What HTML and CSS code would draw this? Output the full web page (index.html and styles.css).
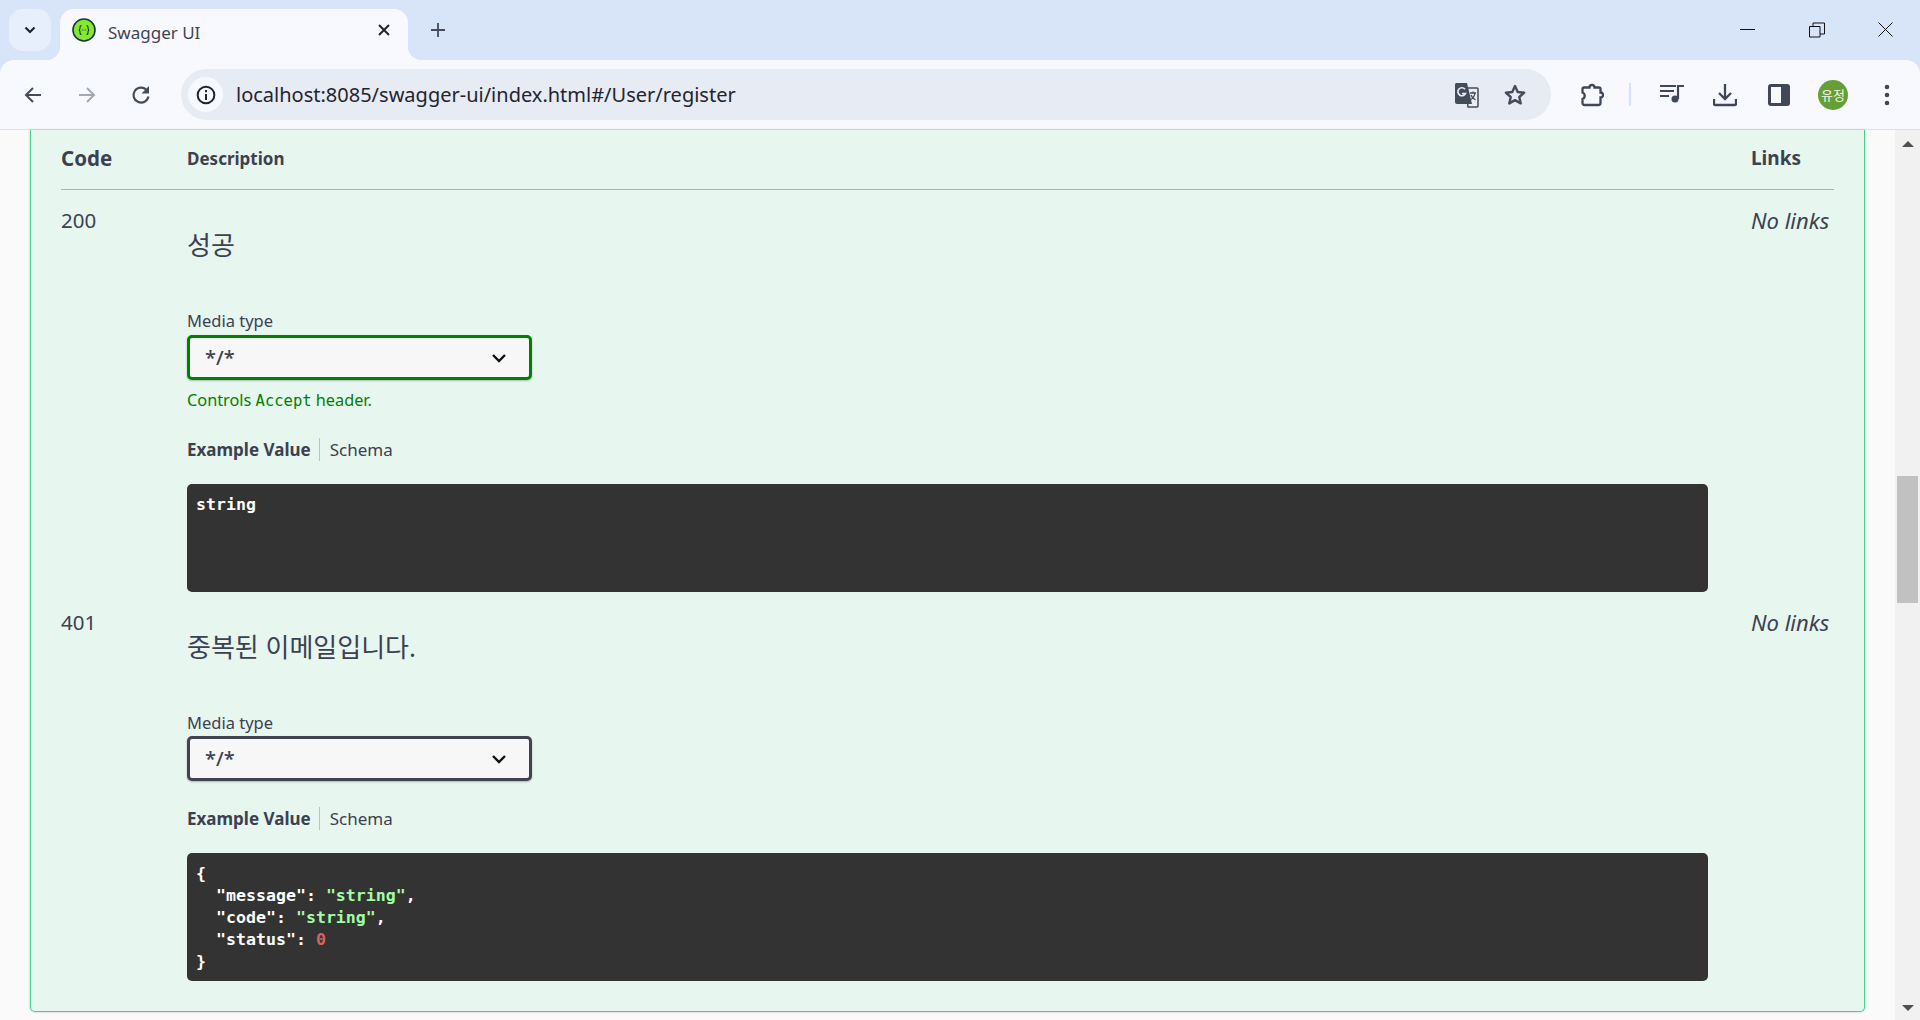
FILE: index.html
```html
<!DOCTYPE html>
<html lang="ko">
<head>
<meta charset="utf-8">
<title>Swagger UI</title>
<link rel="stylesheet" href="styles.css">
</head>
<body>
<header class="chrome">
  <div class="tabstrip">
    <button class="tab-search"><svg width="16" height="16" viewBox="0 0 16 16"><path d="M3.500 5.500 8 10l4.500-4.500" fill="none" stroke="#1f2430" stroke-width="2.200"/></svg></button>
    <div class="tab">
      <svg class="favicon" width="24" height="24" viewBox="0 0 24 24"><circle cx="12" cy="12" r="11" fill="#85ea2d" stroke="#173647" stroke-width="1.600"/><path d="M9.500 7.500c-2 0-1.400 2-1.600 3.300-.1.800-.6 1.200-1.200 1.200.6 0 1.100.4 1.200 1.200.2 1.300-.4 3.300 1.600 3.300M14.500 7.500c2 0 1.400 2 1.600 3.300.1.800.6 1.200 1.200 1.200-.6 0-1.100.4-1.200 1.200-.2 1.300.4 3.300-1.600 3.300" fill="none" stroke="#173647" stroke-width="1.100"/><path d="M9.800 12h.8m1 0h.8m1 0h.8" stroke="#173647" stroke-width="1.200"/></svg>
      <span class="tab-title">Swagger UI</span>
      <svg class="tab-close" width="14" height="14" viewBox="0 0 14 14"><path d="M2 2l10 10M12 2 2 12" stroke="#1f2430" stroke-width="2"/></svg>
    </div>
    <svg class="new-tab" width="18" height="18" viewBox="0 0 18 18"><path d="M9 2v14M2 9h14" stroke="#444b59" stroke-width="1.800"/></svg>
    <div class="window-controls">
      <svg width="16" height="16" viewBox="0 0 16 16"><path d="M0 7.500h15" stroke="#111" stroke-width="1"/></svg>
      <svg width="16" height="16" viewBox="0 0 16 16"><path d="M.5 4.500h10.500v10.500h-10.500zM4 4.500v-3.500h11.500v11h-4.500" fill="none" stroke="#111" stroke-width="1"/></svg>
      <svg width="16" height="16" viewBox="0 0 16 16"><path d="M.5.500l14 14M14.500.500l-14 14" stroke="#111" stroke-width="1"/></svg>
    </div>
  </div>
  <div class="toolbar">
    <div class="nav-group">
      <svg width="20" height="20" viewBox="0 0 20 20"><path d="M18 10H3M10 3l-7 7 7 7" fill="none" stroke="#444b59" stroke-width="2"/></svg>
      <svg width="20" height="20" viewBox="0 0 20 20"><path d="M2 10h15M10 3l7 7-7 7" fill="none" stroke="#a4a8b0" stroke-width="2"/></svg>
      <svg width="20" height="20" viewBox="0 0 20 20"><path d="M15.300 4.800A7.500 7.500 0 1 0 17.400 11.500" fill="none" stroke="#444b59" stroke-width="2.200"/><path d="M18 1v7.500h-7.500z" fill="#444b59"/></svg>
    </div>
    <div class="omnibox">
      <span class="site-info"><svg width="20" height="20" viewBox="0 0 18 18"><circle cx="9" cy="9" r="7.500" fill="none" stroke="#1f2430" stroke-width="1.800"/><path d="M9 8v5.500M9 4.500v2" stroke="#1f2430" stroke-width="1.800"/></svg></span>
      <span class="url">localhost:8085/swagger-ui/index.html#/User/register</span>
      <svg class="translate" width="26" height="26" viewBox="0 0 26 26"><path d="M12 6h11a1 1 0 0 1 1 1v17a1 1 0 0 1-1 1H14z" fill="#e9edf6" stroke="#444b59" stroke-width="1.500"/><path d="M2 1h11l5 21H3a2 2 0 0 1-2-2V2z" fill="#444b59"/><path d="M16 11h6M19 9.500v1.500M21 11c-.5 3-2.500 6-5 7M17 13c.7 2 2.500 4 4.500 5" fill="none" stroke="#444b59" stroke-width="1.300"/><path d="M11 7.200a4 4 0 1 0 .5 4.300H8" fill="none" stroke="#e9edf6" stroke-width="1.700"/></svg>
      <svg class="star" width="24" height="24" viewBox="0 0 24 24"><path d="m12 3 2.700 6 6.500.7-4.900 4.300 1.400 6.400-5.700-3.300-5.700 3.300 1.400-6.400-4.900-4.300 6.500-.7z" fill="none" stroke="#444b59" stroke-width="2.400" stroke-linejoin="round"/></svg>
    </div>
    <div class="actions">
      <svg class="extension" width="24" height="24" viewBox="0 0 24 24"><path d="M4 4.500h5.500a2.500 2.500 0 0 1 5 0H19a1.500 1.500 0 0 1 1.500 1.500V9.500a2.500 2.500 0 0 1 0 5V20a2 2 0 0 1-2 2H4.500a2 2 0 0 1-2-2v-4a3.500 3.500 0 0 0 0-6.500V6A1.500 1.500 0 0 1 4 4.500z" fill="none" stroke="#3f4759" stroke-width="2.300"/></svg>
      <span class="divider"></span>
      <svg class="playlist" width="24" height="24" viewBox="0 0 24 24"><path d="M0 3h16M0 8h14M0 13h9" stroke="#3f4759" stroke-width="2"/><circle cx="15" cy="16" r="3.500" fill="#3f4759"/><path d="M18 16V3h6" fill="none" stroke="#3f4759" stroke-width="2.200"/></svg>
      <svg class="download" width="24" height="24" viewBox="0 0 24 24"><path d="M12 1v14M6 10l6 6 6-6M1 16v5a1 1 0 0 0 1 1h20a1 1 0 0 0 1-1v-5" fill="none" stroke="#3f4759" stroke-width="2.300"/></svg>
      <svg class="sidepanel" width="22" height="22" viewBox="0 0 22 22"><rect x="0" y="0" width="22" height="22" rx="3" fill="#3f4759"/><rect x="3" y="3" width="10" height="16" fill="#f8f9fe"/></svg>
      <span class="avatar">유정</span>
      <svg class="menu" width="6" height="22" viewBox="0 0 6 22"><circle cx="3" cy="3" r="2.300" fill="#3f4759"/><circle cx="3" cy="11" r="2.300" fill="#3f4759"/><circle cx="3" cy="19" r="2.300" fill="#3f4759"/></svg>
    </div>
  </div>
</header>

<div class="viewport">
  <main class="page">
    <section class="opblock">
      <div class="row head">
        <div class="head-code">Code</div>
        <div class="head-desc">Description</div>
        <div class="head-links">Links</div>
      </div>

      <div class="row response first">
        <div class="num">200</div>
        <div class="col-desc">
          <p class="message">성공</p>
          <div class="media">
            <label class="media-label">Media type</label>
            <div class="select active">*/*<svg width="20" height="20" viewBox="0 0 20 20"><path d="M4 7l6 6 6-6" fill="none" stroke="#111" stroke-width="2.400"/></svg></div>
            <small class="controls">Controls <code>Accept</code> header.</small>
          </div>
          <div class="tabs"><span class="on">Example Value</span><span class="off">Schema</span></div>
          <pre class="code tall"><span class="line">string</span></pre>
        </div>
        <div class="none">No links</div>
      </div>

      <div class="row response">
        <div class="num">401</div>
        <div class="col-desc">
          <p class="message">중복된 이메일입니다.</p>
          <div class="media">
            <label class="media-label">Media type</label>
            <div class="select">*/*<svg width="20" height="20" viewBox="0 0 20 20"><path d="M4 7l6 6 6-6" fill="none" stroke="#111" stroke-width="2.400"/></svg></div>
          </div>
          <div class="tabs plain"><span class="on">Example Value</span><span class="off">Schema</span></div>
          <pre class="code json"><span class="line">{</span><span class="line">  "message": <i>"string"</i>,</span><span class="line">  "code": <i>"string"</i>,</span><span class="line">  "status": <em>0</em></span><span class="line">}</span></pre>
        </div>
        <div class="none">No links</div>
      </div>
    </section>
  </main>
  <div class="scrollbar">
    <span class="arrow up"></span>
    <div class="track"><span class="thumb"></span></div>
    <span class="arrow down"></span>
  </div>
</div>
</body>
</html>
```

FILE: styles.css
```css
* { box-sizing: border-box; }
html, body { margin: 0; height: 1020px; overflow: hidden; }
body { font-family: "Noto Sans", "Noto Sans CJK KR", sans-serif; color: #3b4151; background: #fff; }

.chrome { height: 130px; background: #d8e4f7; display: flex; flex-direction: column; }
.tabstrip { height: 60px; display: flex; align-items: flex-start; padding: 9px 0 0 9px; }
.tab-search { width: 42px; height: 42px; border: 0; padding: 0; border-radius: 14px; background: #e8effc; display: flex; align-items: center; justify-content: center; }
.tab { position: relative; width: 348px; height: 51px; margin-left: 9px; background: #f8f9fe; border-radius: 14px 14px 0 0; display: flex; align-items: flex-start; padding: 9px 17px 0 12px; }
.tab::before, .tab::after { content: ""; position: absolute; bottom: 0; width: 14px; height: 14px; }
.tab::before { left: -14px; background: radial-gradient(circle at 0 0, transparent 14px, #f8f9fe 14.5px); }
.tab::after { right: -14px; background: radial-gradient(circle at 100% 0, transparent 14px, #f8f9fe 14.5px); }
.favicon { flex: none; }
.tab-title { margin-left: 12px; margin-top: 1px; color: #3f4450; font-size: 17px; line-height: 27px; flex: 1; }
.tab-close { margin-top: 5px; }
.new-tab { margin: 12px 0 0 21px; }
.window-controls { margin-left: auto; display: flex; gap: 53px; padding: 13px 26px 0 0; }

.toolbar { height: 70px; background: #f8f9fe; border-radius: 14px 14px 0 0; border-bottom: 1px solid #dfe1e8; display: flex; align-items: center; padding: 0 0 0 23px; }
.nav-group { display: flex; gap: 34px; margin-right: 30px; }
.omnibox { width: 1370px; height: 51px; background: #e6ebf4; border-radius: 26px; display: flex; align-items: center; padding-left: 7px; }
.site-info { width: 35px; height: 35px; border-radius: 50%; background: #f8f9fe; display: flex; align-items: center; justify-content: center; }
.url { margin-left: 13px; font-size: 20px; color: #1f2430; flex: 1; }
.translate { margin-right: 23px; }
.star { margin-right: 24px; }
.actions { display: flex; align-items: center; margin-left: 29px; }
.divider { width: 2px; height: 23px; background: #d3e3fd; margin: 0 29px 0 25px; }
.download { margin-left: 29px; }
.sidepanel { margin-left: 31px; }
.avatar { width: 30px; height: 30px; margin-left: 28px; border-radius: 50%; background: #669f35; color: #f4f8ee; font-size: 13px; display: flex; align-items: center; justify-content: center; }
.menu { margin-left: 36px; }

.viewport { height: 890px; display: flex; background: #fafafa; }
.page { flex: 1; padding: 0 30px 8px; min-width: 0; }
.opblock { height: 882px; background: #e7f6ef; border: 1px solid #49cc90; border-top: 0; border-radius: 0 0 5px 5px; box-shadow: 0 0 3px rgba(0,0,0,.19); padding: 0 30px; }

.row { display: grid; grid-template-columns: 126px 1fr 83px; }
.col-desc { min-width: 0; }
.head { height: 60px; border-bottom: 1px solid #a7b5ae; align-items: center; padding-bottom: 3px; font-weight: 700; }
.head-code { font-size: 20.500px; }
.head-links { font-size: 19px; }
.head-desc { font-size: 17px; }
.response { padding-top: 18px; }
.response.first { height: 402px; }
.num { font-size: 20.500px; line-height: 24px; }
.none { font-style: italic; font-size: 22px; line-height: 24px; white-space: nowrap; }
.message { margin: 21px 0 0; font-size: 26px; line-height: 32px; color: #3b4151; }

.media { margin-top: 49px; }
.media-label { display: block; font-size: 16.500px; line-height: 22px; }
.select { width: 345px; height: 45px; margin-top: 2px; border: 3px solid #41444e; border-radius: 5px; background: #f7f7f7; box-shadow: 0 1px 2px rgba(0,0,0,.25); display: flex; align-items: center; justify-content: space-between; padding: 0 20px 0 15px; font-size: 20px; font-weight: 500; }
.select.active { border-color: #008000; margin-top: 3px; }
.controls { display: block; margin-top: 10px; font-size: 16.300px; line-height: 21px; color: #008000; }
.controls code { font-family: "DejaVu Sans Mono", monospace; font-size: 15.500px; }
.tabs { margin-top: 25px; display: flex; align-items: center; font-size: 17px; height: 24px; }
.tabs.plain { margin-top: 25px; }
.on { font-weight: 700; padding-right: 8px; border-right: 1px solid rgba(0,0,0,.2); }
.off { padding-left: 10px; }
.code { margin: 23px 0 0; width: 1521px; padding: 10px 9px; border-radius: 5px; background: #333; color: #fff; font-family: "DejaVu Sans Mono", monospace; font-size: 16.600px; line-height: 22px; font-weight: 700; }
.tall { height: 108px; }
.json { height: 128px; }
.line { display: block; }
.code i { font-style: normal; color: #a2fca2; }
.code em { font-style: normal; color: #d36363; }

.scrollbar { width: 25px; background: #f1f1f1; display: flex; flex-direction: column; align-items: center; padding: 11px 0 9px; }
.arrow { width: 0; height: 0; border-left: 6px solid transparent; border-right: 6px solid transparent; flex: none; }
.arrow.up { border-bottom: 6px solid #505050; }
.arrow.down { border-top: 6px solid #505050; }
.track { flex: 1; width: 100%; padding: 329px 2px 0; }
.thumb { display: block; height: 127px; background: #c1c1c1; }
```
